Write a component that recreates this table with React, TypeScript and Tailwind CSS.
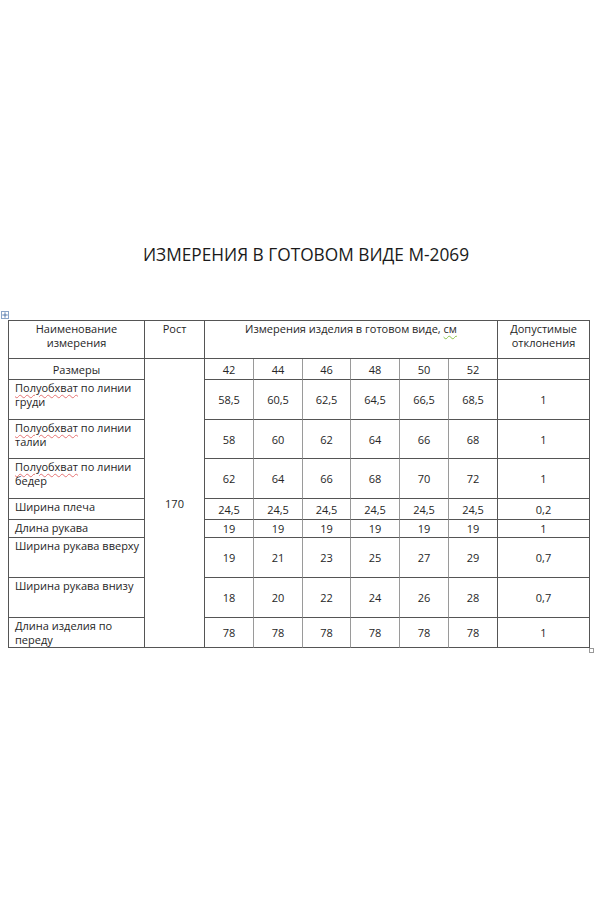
import React from "react";

type Row = {
  label: React.ReactNode;
  vals: string[];
  tol: string;
  h: string;
};

const Wavy = ({ children }: { children: React.ReactNode }) => (
  <span className="underline decoration-wavy decoration-[#e57373] decoration-1 underline-offset-2">{children}</span>
);

const rows: Row[] = [
  { label: (<><Wavy>Полуобхват</Wavy> по линии<br />груди</>), vals: ["58,5", "60,5", "62,5", "64,5", "66,5", "68,5"], tol: "1", h: "h-[40px]" },
  { label: (<><Wavy>Полуобхват</Wavy> по линии<br />талии</>), vals: ["58", "60", "62", "64", "66", "68"], tol: "1", h: "h-[39px]" },
  { label: (<><Wavy>Полуобхват</Wavy> по линии<br />бедер</>), vals: ["62", "64", "66", "68", "70", "72"], tol: "1", h: "h-[40px]" },
  { label: "Ширина плеча", vals: ["24,5", "24,5", "24,5", "24,5", "24,5", "24,5"], tol: "0,2", h: "h-[21px]" },
  { label: "Длина рукава", vals: ["19", "19", "19", "19", "19", "19"], tol: "1", h: "h-[18px]" },
  { label: "Ширина рукава вверху", vals: ["19", "21", "23", "25", "27", "29"], tol: "0,7", h: "h-[40px]" },
  { label: "Ширина рукава внизу", vals: ["18", "20", "22", "24", "26", "28"], tol: "0,7", h: "h-[40px]" },
  { label: (<>Длина изделия по<br />переду</>), vals: ["78", "78", "78", "78", "78", "78"], tol: "1", h: "h-[29px]" },
];

const sizes = ["42", "44", "46", "48", "50", "52"];

const numCell = (i: number) =>
  "p-0 text-center align-middle leading-[15px] border-b border-b-[#555] border-r " +
  (i === 5 ? "border-r-[#555]" : "border-r-[#9a9a9a]");

export default function App() {
  return (
    <div
      className="w-[599px] h-[899px] bg-white text-[#262626] relative"
      style={{ fontFamily: '"Open Sans", "Noto Sans", sans-serif' }}
    >
      <div className="pt-[243px] pl-[13px] h-[311px] text-center text-[17.3px] leading-[24px] text-[#1a1a1a]">
        ИЗМЕРЕНИЯ В ГОТОВОМ ВИДЕ М-2069
      </div>
      <div className="relative ml-[8px] mt-[9px]">
        <div className="absolute -left-[7px] -top-[9px] w-[8px] h-[8px] border border-[#8aa4c8] bg-white flex items-center justify-center">
          <svg width="6" height="6" viewBox="0 0 6 6">
            <path d="M3 0.3V5.7M0.3 3H5.7" stroke="#4a6fa5" strokeWidth="0.9" />
          </svg>
        </div>
        <table className="border-separate border-spacing-0 border-t border-l border-[#555] text-[11px] leading-[15px] table-fixed w-[581px]">
          <colgroup>
            <col className="w-[136px]" />
            <col className="w-[60px]" />
            <col className="w-[49px]" />
            <col className="w-[49px]" />
            <col className="w-[48px]" />
            <col className="w-[49px]" />
            <col className="w-[49px]" />
            <col className="w-[49px]" />
            <col className="w-[92px]" />
          </colgroup>
          <tbody>
            <tr className="h-[38px]">
              <td className="p-0 pt-[1px] align-top text-center leading-[14px] border-r border-b border-[#555]">
                Наименование<br />измерения
              </td>
              <td className="p-0 pt-[1px] align-top text-center leading-[14px] border-r border-b border-[#555]">
                Рост
              </td>
              <td colSpan={6} className="p-0 pt-[1px] align-top text-center leading-[14px] border-r border-b border-[#555]">
                Измерения изделия в готовом виде,{" "}
                <span className="underline decoration-wavy decoration-[#8bc34a] decoration-1 underline-offset-2">см</span>
              </td>
              <td className="p-0 pt-[1px] align-top text-center leading-[14px] border-r border-b border-[#555]">
                Допустимые<br />отклонения
              </td>
            </tr>
            <tr className="h-[21px]">
              <td className="p-0 text-center align-middle border-r border-b border-[#555]">Размеры</td>
              <td rowSpan={9} className="p-0 text-center align-middle border-r border-b border-[#555]">
                170
              </td>
              {sizes.map((s, i) => (
                <td key={s} className={numCell(i)}>{s}</td>
              ))}
              <td className="p-0 border-r border-b border-[#555]"></td>
            </tr>
            {rows.map((r, ri) => (
              <tr key={ri} className={r.h}>
                <td className="p-0 pl-[6px] pt-[1px] align-top text-left leading-[14px] border-r border-b border-[#555]">
                  {r.label}
                </td>
                {r.vals.map((v, i) => (
                  <td key={i} className={numCell(i)}>{v}</td>
                ))}
                <td className="p-0 text-center align-middle border-r border-b border-[#555]">{r.tol}</td>
              </tr>
            ))}
          </tbody>
        </table>
        <div className="absolute left-[581px] top-full w-[5px] h-[5px] border border-[#999] bg-white" />
      </div>
    </div>
  );
}
